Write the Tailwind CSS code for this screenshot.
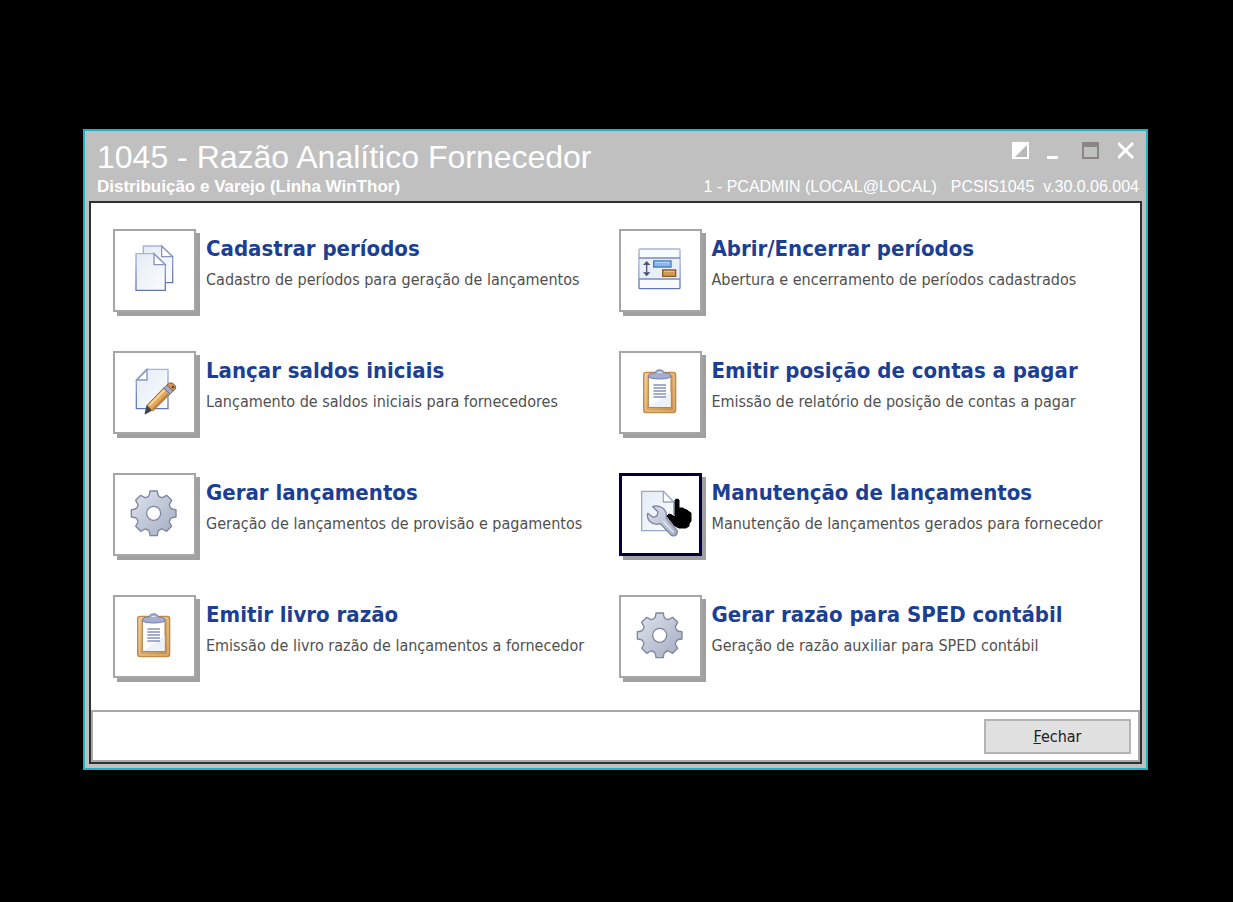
<!DOCTYPE html>
<html lang="pt-BR">

<head>
    <meta charset="UTF-8" />
    <meta name="viewport" content="width=device-width, initial-scale=1.0" />
    <title>1045 - Razão Analítico Fornecedor</title>
    <script src="https://cdn.jsdelivr.net/npm/@tailwindcss/browser@4"></script>
</head>

<body class="bg-black min-h-screen pt-[129px] pb-[132px] pl-[83px] pr-[85px]">
    <!-- ========== SHARED ICONS ======= -->
    <svg class="absolute w-0 h-0" aria-hidden="true">
        <defs>
            <linearGradient id="paper" x1="0" y1="0" x2="1" y2="1">
                <stop offset="0" stop-color="#e4ecf4" />
                <stop offset="1" stop-color="#fbfdff" />
            </linearGradient>
            <linearGradient id="steel" x1="0" y1="0" x2="1" y2="1">
                <stop offset="0" stop-color="#dfe4ee" />
                <stop offset="1" stop-color="#a3abbf" />
            </linearGradient>
            <linearGradient id="edge" x1="0" y1="0" x2="0" y2="1">
                <stop offset="0" stop-color="#a9b4d4" />
                <stop offset="1" stop-color="#6477ad" />
            </linearGradient>
            <linearGradient id="wood" x1="0" y1="0" x2="1" y2="1">
                <stop offset="0" stop-color="#f0c98c" />
                <stop offset="1" stop-color="#c48a45" />
            </linearGradient>
        </defs>
        <symbol id="gear" viewBox="30 24 237 237">
            <g transform="translate(146 139)">
                <path
                    d="M-11-67H11Q12-54 16-51Q22-47 26-47L39-54L54-39L47-26Q47-22 51-16Q54-12 67-11V11Q54 12 51 16Q47 22 47 26L54 39L39 54L26 47Q22 47 16 51Q12 54 11 67H-11Q-12 54-16 51Q-22 47-26 47L-39 54L-54 39L-47 26Q-47 22-51 16Q-54 12-67 11V-11Q-54-12-51-16Q-47-22-47-26L-54-39L-39-54L-26-47Q-22-47-16-51Q-12-54-11-67ZM0-21A21 21 0 1 0 0 21A21 21 0 1 0 0-21Z"
                    fill="url(#steel)" fill-rule="evenodd" stroke="#7f87a0" stroke-width="4" stroke-linejoin="round" />
            </g>
        </symbol>
        <symbol id="clipboard" viewBox="30 24 237 237">
            <rect x="98" y="82" width="96" height="121" rx="7" fill="url(#wood)" stroke="#c08a4a" stroke-width="4" />
            <rect x="103" y="87" width="86" height="111" rx="3" fill="none" stroke="#f3d9a8" stroke-width="2" />
            <path d="M112 92H180V187H112Z" fill="#fff" stroke="#ad7a40" stroke-width="3" />
            <path d="M113 186L179 140V186Z" fill="#edf2f9" />
            <path d="M113 97V92Q113 86 122 84H132Q135 74 146 74T160 84H170Q179 86 179 92V97Q170 102 146 102T113 97Z"
                fill="#a4aed0" stroke="#7480ab" stroke-width="3" />
            <path d="M138 84Q146 77 154 84Z" fill="#e5e9f4" />
            <path d="M127 120H165M127 129H165M127 138H165M127 147H165M127 156H165" stroke="#8592ba" stroke-width="5" />
        </symbol>
    </svg>

    <!-- ========== WINDOW ======= -->
    <div class="bg-[#c0c0c0] border-2 border-[#20b2c0] px-1 pb-1">
        <header class="flex justify-between h-[70px] pl-2 pr-[3px] text-white font-['Liberation_Sans',sans-serif]">
            <div>
                <h1 class="text-[32px] leading-[32px] pt-[10px] whitespace-nowrap">1045 - Razão Analítico Fornecedor</h1>
                <p class="text-[17px] leading-[20px] pt-1 font-bold whitespace-nowrap">Distribuição e Varejo (Linha WinThor)</p>
            </div>
            <div class="flex flex-col items-end">
                <div class="flex h-[42px] pt-[10px] pr-px gap-4">
                    <button type="button" aria-label="Recolher" class="w-5 h-5">
                        <svg class="w-5 h-5" viewBox="0 0 20 20">
                            <path d="M2 1H19V18H2Z" fill="#fff" />
                            <path d="M17 4V16H5Z" fill="#b8b8b8" />
                        </svg>
                    </button>
                    <button type="button" aria-label="Minimizar" class="w-5 h-5">
                        <svg class="w-5 h-5" viewBox="0 0 20 20">
                            <path d="M1 15H12V18H1Z" fill="#fff" />
                        </svg>
                    </button>
                    <button type="button" aria-label="Maximizar" class="w-5 h-5">
                        <svg class="w-5 h-5" viewBox="0 0 20 20">
                            <path d="M1 2H16V17H1Z" fill="none" stroke="#8a8686" stroke-width="2" />
                            <path d="M0 1H17V6H0Z" fill="#8a8686" />
                        </svg>
                    </button>
                    <button type="button" aria-label="Fechar janela" class="w-5 h-5">
                        <svg class="w-5 h-5" viewBox="2 0 20 20">
                            <path d="M2 2L17 17M17 2L2 17" stroke="#fff" stroke-width="3" />
                        </svg>
                    </button>
                </div>
                <p class="flex gap-[14px] text-[16px] leading-[20px] pt-1 whitespace-nowrap">
                    <span>1 - PCADMIN (LOCAL@LOCAL)</span>
                    <span>PCSIS1045&nbsp; v.30.0.06.004</span>
                </p>
            </div>
        </header>

        <div class="border-2 border-[#303030] bg-white font-['DejaVu_Sans_Condensed','DejaVu_Sans',sans-serif]">
            <main class="grid grid-cols-2 gap-y-[39px] pt-[26px] pb-8 pl-[22px] pr-4">
                <div class="flex gap-[10px]">
                    <button type="button" aria-labelledby="t1"
                        class="shrink-0 w-[83px] h-[83px] bg-white border-2 border-[#a6a6a6] shadow-[4px_4px_0_#a0a0a0]">
                        <svg class="w-full h-full" viewBox="30 29 237 237">
                            <path d="M115 74H170L203 106V184H115Z" fill="url(#paper)" stroke="url(#edge)" stroke-width="4" />
                            <path d="M170 74V106H203Z" fill="#fff" stroke="#8795c0" stroke-width="4" />
                            <path d="M93 97H147L181 130V207H93Z" fill="url(#paper)" stroke="url(#edge)" stroke-width="4" />
                            <path d="M147 97V130H181Z" fill="#fff" stroke="#8795c0" stroke-width="4" />
                        </svg>
                    </button>
                    <div>
                        <h2 id="t1" class="pt-[5px] text-[22px] leading-[30px] font-bold text-[#1c3f94] whitespace-nowrap">Cadastrar períodos</h2>
                        <p class="pt-1 text-[16px] leading-[24px] text-[#505050] whitespace-nowrap">Cadastro de períodos para geração de lançamentos</p>
                    </div>
                </div>
                <div class="flex gap-[10px]">
                    <button type="button" aria-labelledby="t2"
                        class="shrink-0 w-[83px] h-[83px] bg-white border-2 border-[#a6a6a6] shadow-[4px_4px_0_#a0a0a0]">
                        <svg class="w-full h-full" viewBox="32 29 237 237">
                            <rect x="86" y="83" width="123" height="119" rx="3" fill="#f8fbfe" stroke="url(#edge)" stroke-width="4" />
                            <path d="M88 110H207V173H88Z" fill="#e8eff8" />
                            <path d="M86 110H209M86 173H209" stroke="#7b8cbd" stroke-width="4" />
                            <path d="M109 125V159" stroke="#4f5270" stroke-width="4" />
                            <path d="M98 131L109 119L120 131ZM98 153L109 165L120 153Z" fill="#4f5270" />
                            <path d="M130 119H182V137H130Z" fill="#86b9ee" stroke="#4b7dbb" stroke-width="4" />
                            <path d="M134 123H178" stroke="#b9dcfa" stroke-width="3" />
                            <path d="M157 146H196V165H157Z" fill="#cd9a58" stroke="#8a5c28" stroke-width="4" />
                            <path d="M161 150H192" stroke="#edc78d" stroke-width="3" />
                        </svg>
                    </button>
                    <div>
                        <h2 id="t2" class="pt-[5px] text-[22px] leading-[30px] font-bold text-[#1c3f94] whitespace-nowrap">Abrir/Encerrar períodos</h2>
                        <p class="pt-1 text-[16px] leading-[24px] text-[#505050] whitespace-nowrap">Abertura e encerramento de períodos cadastrados</p>
                    </div>
                </div>
                <div class="flex gap-[10px]">
                    <button type="button" aria-labelledby="t3"
                        class="shrink-0 w-[83px] h-[83px] bg-white border-2 border-[#a6a6a6] shadow-[4px_4px_0_#a0a0a0]">
                        <svg class="w-full h-full" viewBox="30 24 237 237">
                            <path d="M124 73H189V191H94V105Z" fill="url(#paper)" stroke="url(#edge)" stroke-width="4" />
                            <path d="M126 74V105H95Z" fill="#fff" stroke="#8795c0" stroke-width="4" />
                            <path d="M120 207L126 182L140 196Z" fill="#42424e" stroke="#42424e" stroke-width="3" stroke-linejoin="round" />
                            <path d="M126 181L176 129L195 147L143 198Z" fill="#e3a85c" stroke="#9a6930" stroke-width="3" />
                            <path d="M133 182L179 135" stroke="#f8d59b" stroke-width="6" />
                            <path d="M143 193L189 146" stroke="#bd7b36" stroke-width="4" />
                            <path d="M176 129L186 120L205 138L195 147Z" fill="#9fa9ce" stroke="#68739e" stroke-width="3" />
                            <path d="M186 120Q194 110 204 115Q216 124 211 132L205 138Z" fill="#d29a5a" stroke="#8f6032" stroke-width="3" />
                            <circle cx="204" cy="126" r="4" fill="#5d4538" />
                        </svg>
                    </button>
                    <div>
                        <h2 id="t3" class="pt-[5px] text-[22px] leading-[30px] font-bold text-[#1c3f94] whitespace-nowrap">Lançar saldos iniciais</h2>
                        <p class="pt-1 text-[16px] leading-[24px] text-[#505050] whitespace-nowrap">Lançamento de saldos iniciais para fornecedores</p>
                    </div>
                </div>
                <div class="flex gap-[10px]">
                    <button type="button" aria-labelledby="t4"
                        class="shrink-0 w-[83px] h-[83px] bg-white border-2 border-[#a6a6a6] shadow-[4px_4px_0_#a0a0a0]">
                        <svg class="w-full h-full"><use href="#clipboard" /></svg>
                    </button>
                    <div>
                        <h2 id="t4" class="pt-[5px] text-[22px] leading-[30px] font-bold text-[#1c3f94] whitespace-nowrap">Emitir posição de contas a pagar</h2>
                        <p class="pt-1 text-[16px] leading-[24px] text-[#505050] whitespace-nowrap">Emissão de relatório de posição de contas a pagar</p>
                    </div>
                </div>
                <div class="flex gap-[10px]">
                    <button type="button" aria-labelledby="t5"
                        class="shrink-0 w-[83px] h-[83px] bg-white border-2 border-[#a6a6a6] shadow-[4px_4px_0_#a0a0a0]">
                        <svg class="w-full h-full"><use href="#gear" /></svg>
                    </button>
                    <div>
                        <h2 id="t5" class="pt-[5px] text-[22px] leading-[30px] font-bold text-[#1c3f94] whitespace-nowrap">Gerar lançamentos</h2>
                        <p class="pt-1 text-[16px] leading-[24px] text-[#505050] whitespace-nowrap">Geração de lançamentos de provisão e pagamentos</p>
                    </div>
                </div>
                <div class="flex gap-[10px]">
                    <button type="button" aria-labelledby="t6"
                        class="relative shrink-0 w-[83px] h-[83px] bg-white border-3 border-[#000040] shadow-[4px_4px_0_#a0a0a0]">
                        <svg class="w-full h-full" viewBox="35 27 231 231">
                            <path d="M94 73H159L190 105V191H94Z" fill="url(#paper)" stroke="#9ba7cb" stroke-width="4" />
                            <path d="M159 73V105H190Z" fill="#fff" stroke="#9ba7cb" stroke-width="4" />
                            <path
                                d="M127 119Q143 113 158 124Q171 135 168 153L200 190Q204 201 194 206Q186 208 181 203L150 170Q132 176 118 163Q109 153 112 139L128 151L140 147L143 134Z"
                                fill="url(#steel)" stroke="#7c84a3" stroke-width="4" stroke-linejoin="round" />
                            <path d="M158 162L190 197" stroke="#e6eaf3" stroke-width="4" />
                        </svg>
                        <!-- mouse pointer -->
                        <svg class="absolute left-[44px] top-[20px] w-[28px] h-[36px]" viewBox="0 0 28 36">
                            <path
                                d="M9 4Q11 2 13 4V12L17 12L18 13L21 14L22 15L25 17V25L23 28V30L20 32H13L9 30L4 24L1 20L3 18L6 19L8 21L9 20Z"
                                fill="#000" stroke="#000" stroke-linejoin="round" />
                        </svg>
                    </button>
                    <div>
                        <h2 id="t6" class="pt-[5px] text-[22px] leading-[30px] font-bold text-[#1c3f94] whitespace-nowrap">Manutenção de lançamentos</h2>
                        <p class="pt-1 text-[16px] leading-[24px] text-[#505050] whitespace-nowrap">Manutenção de lançamentos gerados para fornecedor</p>
                    </div>
                </div>
                <div class="flex gap-[10px]">
                    <button type="button" aria-labelledby="t7"
                        class="shrink-0 w-[83px] h-[83px] bg-white border-2 border-[#a6a6a6] shadow-[4px_4px_0_#a0a0a0]">
                        <svg class="w-full h-full"><use href="#clipboard" /></svg>
                    </button>
                    <div>
                        <h2 id="t7" class="pt-[5px] text-[22px] leading-[30px] font-bold text-[#1c3f94] whitespace-nowrap">Emitir livro razão</h2>
                        <p class="pt-1 text-[16px] leading-[24px] text-[#505050] whitespace-nowrap">Emissão de livro razão de lançamentos a fornecedor</p>
                    </div>
                </div>
                <div class="flex gap-[10px]">
                    <button type="button" aria-labelledby="t8"
                        class="shrink-0 w-[83px] h-[83px] bg-white border-2 border-[#a6a6a6] shadow-[4px_4px_0_#a0a0a0]">
                        <svg class="w-full h-full"><use href="#gear" /></svg>
                    </button>
                    <div>
                        <h2 id="t8" class="pt-[5px] text-[22px] leading-[30px] font-bold text-[#1c3f94] whitespace-nowrap">Gerar razão para SPED contábil</h2>
                        <p class="pt-1 text-[16px] leading-[24px] text-[#505050] whitespace-nowrap">Geração de razão auxiliar para SPED contábil</p>
                    </div>
                </div>
            </main>
            <footer class="flex justify-end border-2 border-[#a8a8a8] px-[7px] pt-[7px] pb-[6px]">
                <button type="button"
                    class="w-[147px] h-[35px] bg-[#e1e1e1] border-2 border-[#b4b4b4] text-[16px] text-[#202020]"><span class="underline">F</span>echar</button>
            </footer>
        </div>
    </div>
</body>

</html>
